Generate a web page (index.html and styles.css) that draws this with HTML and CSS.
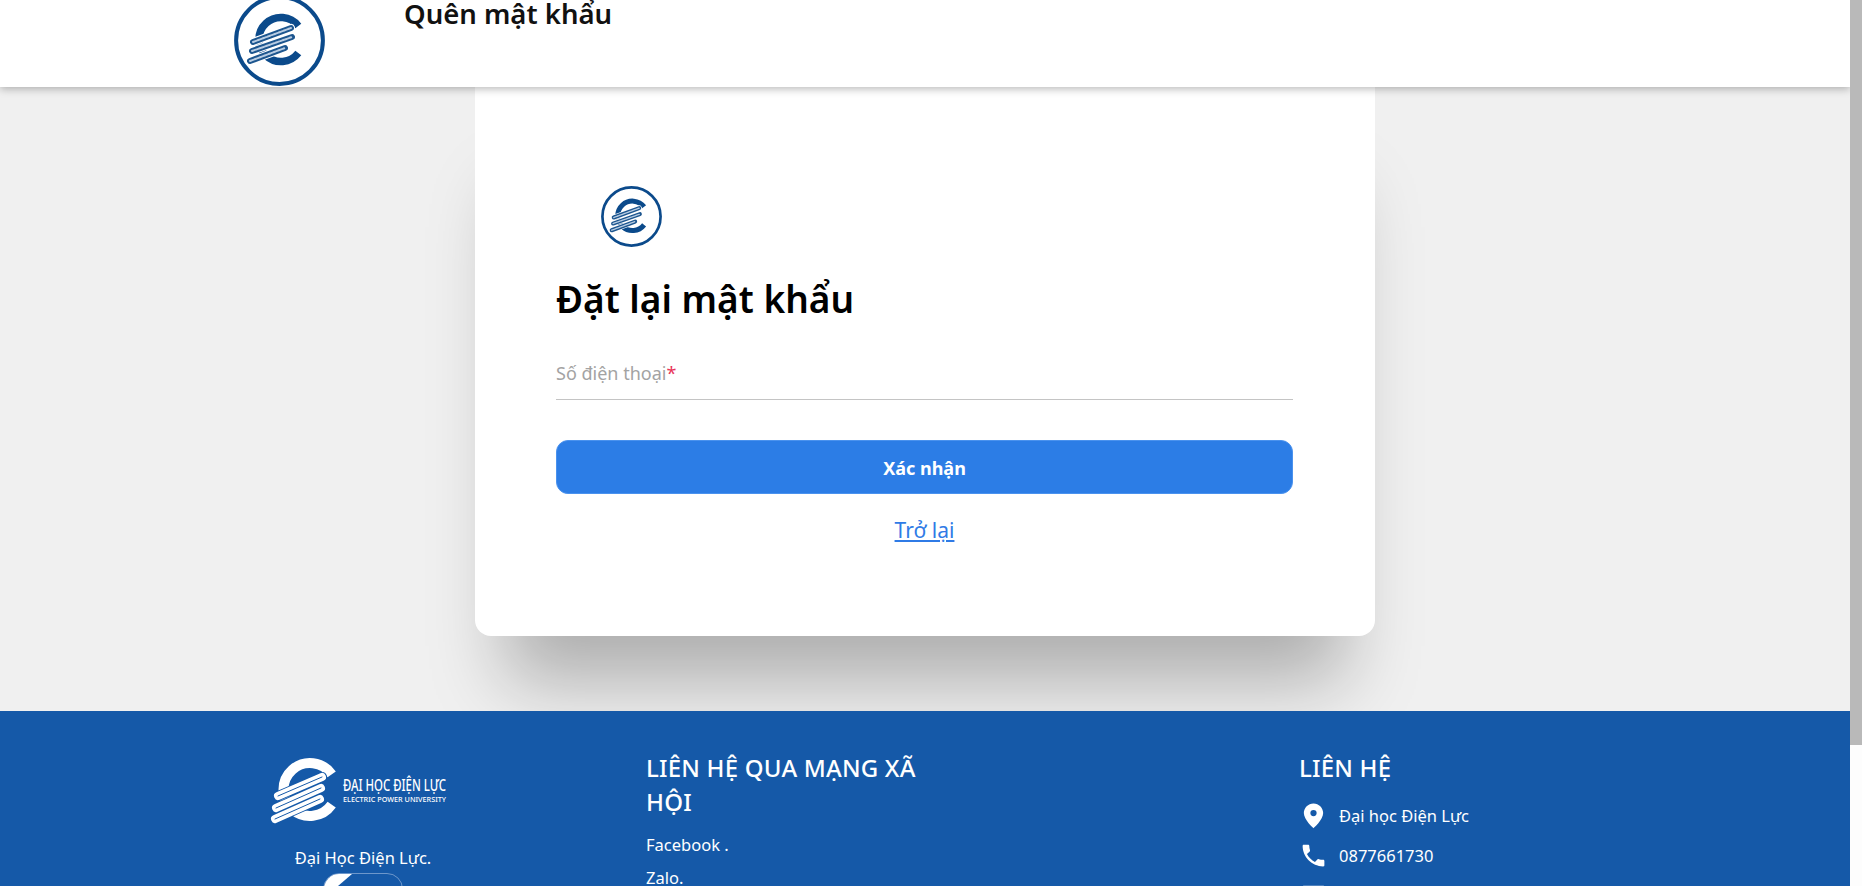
FILE: index.html
```html
<!doctype html>
<html lang="vi">
  <head>
    <meta charset="UTF-8" />
    <title>Quên mật khẩu</title>
    <link rel="stylesheet" href="styles.css">
  </head>
  <body>
    <svg class="defs" width="0" height="0">
      <symbol id="logo" viewBox="0 0 91 91">
        <circle cx="45.5" cy="45.5" r="43.400" fill="none" stroke="#0b4a8b" stroke-width="4" />
        <path d="M64.300 31A22 22 0 1 0 64.300 58" fill="none" stroke="#0b4a8b" stroke-width="7.500" />
        <g fill="none" stroke-linecap="round">
          <path d="M19 47L57 33M18 56L58 42M16 66L51 53" stroke="#fff" stroke-width="8" />
          <path d="M19 47L57 33M18 56L58 42M16 66L51 53" stroke="#1d568f" stroke-width="6" />
          <path d="M19 47L57 33M18 56L58 42M16 66L51 53" stroke="#b9cde3" stroke-width="2" stroke-dasharray="1.500 1" />
        </g>
      </symbol>
    </svg>

    <div class="page">
      <header class="topbar">
        <svg class="topbar-logo"><use href="#logo" /></svg>
        <h2>Quên mật khẩu</h2>
      </header>

      <main class="content">
        <form class="card">
          <svg class="card-logo"><use href="#logo" /></svg>
          <h1>Đặt lại mật khẩu</h1>
          <div class="form-group">
            <label for="phone">Số điện thoại<span class="req">*</span></label>
            <input type="text" id="phone" name="phone" />
          </div>
          <button type="button">Xác nhận</button>
          <a href="#" class="back">Trở lại</a>
        </form>
      </main>

      <footer class="footer">
        <div class="col-brand">
          <svg class="footer-logo" viewBox="0 0 180 70">
            <path d="M62.700 19.300A26.500 26.500 0 1 0 62.700 49.700" fill="none" stroke="#fff" stroke-width="10" />
            <g fill="none" stroke-linecap="round">
              <path d="M9 41L53 22M7 53L52 33M6 64L51 44" stroke="#1559a8" stroke-width="10" />
              <path d="M9 41L53 22M7 53L52 33M6 64L51 44" stroke="#fff" stroke-width="8" />
              <path d="M9 41L53 22M7 53L52 33M6 64L51 44" stroke="#1559a8" stroke-width="1" />
            </g>
            <text x="74" y="36" class="logo-name" textLength="103" lengthAdjust="spacingAndGlyphs">ĐẠI HỌC ĐIỆN LỰC</text>
            <text x="74" y="47" class="logo-sub" textLength="103" lengthAdjust="spacingAndGlyphs">ELECTRIC POWER UNIVERSITY</text>
          </svg>
          <p class="brand-name">Đại Học Điện Lực.</p>
          <div class="pill"><span class="pill-mark"></span></div>
        </div>

        <div class="col-social">
          <h3>LIÊN HỆ QUA MẠNG XÃ HỘI</h3>
          <p>Facebook .</p>
          <p>Zalo.</p>
        </div>

        <div class="col-contact">
          <h3>LIÊN HỆ</h3>
          <div class="contact-row">
            <svg viewBox="0 0 24 24"><path d="M12 2C7.600 2 4 5.600 4 10c0 5.600 8 12.600 8 12.600S20 15.600 20 10c0-4.400-3.600-8-8-8zm0 10.600a2.600 2.600 0 1 1 0-5.200 2.600 2.600 0 0 1 0 5.200z" /></svg>
            <span>Đại học Điện Lực</span>
          </div>
          <div class="contact-row">
            <svg viewBox="0 0 24 24"><path d="M6.600 10.800c1.400 2.800 3.800 5.100 6.600 6.600l2.200-2.200c.3-.3.700-.4 1-.2 1.100.4 2.300.6 3.600.6.600 0 1 .4 1 1V20c0 .6-.4 1-1 1C10.600 21 3 13.400 3 4c0-.6.400-1 1-1h3.500c.6 0 1 .4 1 1 0 1.300.2 2.500.6 3.600.1.300 0 .7-.2 1l-2.300 2.200z" /></svg>
            <span>0877661730</span>
          </div>
          <div class="contact-row">
            <svg viewBox="0 0 24 24"><path d="M20 4H4c-1.100 0-2 .9-2 2v12c0 1.100.9 2 2 2h16c1.100 0 2-.9 2-2V6c0-1.100-.9-2-2-2zm0 4l-8 5-8-5V6l8 5 8-5v2z" /></svg>
          </div>
        </div>
      </footer>
    </div>

    <div class="scrollbar"><div class="thumb"></div></div>
  </body>
</html>
```

FILE: styles.css
```css
html,
body {
  height: 886px;
  margin: 0;
  overflow: hidden;
}
body {
  display: flex;
  font-family: "Noto Sans", "Open Sans", sans-serif;
  background: #fdfdfd;
}
.defs {
  position: absolute;
}
.page {
  flex: 1;
  min-width: 0;
  height: 886px;
  overflow: hidden;
  display: flex;
  flex-direction: column;
}
.topbar {
  position: relative;
  z-index: 2;
  flex: none;
  height: 87px;
  background: #fff;
  box-shadow: 0 2px 8px rgba(0, 0, 0, 0.28);
  display: flex;
  align-items: flex-start;
  padding-left: 234px;
}
.topbar-logo {
  width: 91px;
  height: 91px;
  margin-top: -5px;
}
.topbar h2 {
  margin: 0 0 0 79px;
  font-size: 27.500px;
  font-weight: 600;
  line-height: 28px;
  color: #111;
}
.content {
  flex: none;
  height: 624px;
  background: #f0f0f0;
  display: flex;
  justify-content: center;
}
.card {
  box-sizing: border-box;
  width: 900px;
  height: 549px;
  padding: 99px 82px 0 81px;
  background: #fff;
  border-radius: 0 0 16px 16px;
  box-shadow: 0 75px 70px -30px rgba(0, 0, 0, 0.28);
  display: flex;
  flex-direction: column;
}
.card-logo {
  width: 61px;
  height: 61px;
  margin-left: 45px;
  flex: none;
}
.card h1 {
  margin: 27px 0 0;
  font-size: 37px;
  font-weight: 600;
  line-height: 50px;
  color: #000;
}
.form-group {
  position: relative;
  margin-top: 26px;
  height: 49px;
  border-bottom: 1px solid #c4c4c4;
}
.form-group label {
  position: absolute;
  left: 0;
  top: 11px;
  font-size: 18px;
  line-height: 24px;
  color: #a3a3a3;
}
.req {
  color: #e8345a;
}
.form-group input {
  width: 100%;
  height: 100%;
  padding: 0;
  border: none;
  outline: none;
  background: transparent;
  box-sizing: border-box;
}
button {
  margin-top: 40px;
  height: 54px;
  padding-top: 3px;
  border: 1px solid #4a92ee;
  border-radius: 12px;
  background-color: #2c7de6;
  color: #fff;
  font-family: inherit;
  font-size: 18px;
  font-weight: 700;
  cursor: pointer;
}
.back {
  align-self: center;
  margin-top: 21px;
  font-size: 21px;
  line-height: 30px;
  color: #2f7be6;
}
.footer {
  flex: none;
  height: 175px;
  background: #1559a8;
  color: #fff;
  box-sizing: border-box;
  padding: 0 0 0 226px;
  display: grid;
  grid-template-columns: 420px 653px 1fr;
}
.col-brand {
  width: 274px;
  display: flex;
  flex-direction: column;
  align-items: center;
  padding-top: 44px;
}
.footer-logo {
  width: 180px;
  height: 70px;
  flex: none;
  margin-left: -8px;
}
.logo-name {
  font-size: 16px;
  font-weight: 500;
  fill: #fff;
}
.logo-sub {
  font-size: 7px;
  font-weight: 500;
  fill: #fff;
}
.brand-name {
  margin: 22px 0 0;
  font-size: 16.500px;
  line-height: 22px;
}
.pill {
  flex: none;
  width: 78px;
  height: 40px;
  margin-top: 4px;
  border: 1px solid #6d97cb;
  border-radius: 16px;
  overflow: hidden;
}
.pill-mark {
  display: block;
  width: 28px;
  height: 24px;
  background: #fff;
  clip-path: polygon(0 0, 100% 0, 0 100%);
}
.col-social {
  padding-top: 40px;
}
.col-social h3,
.col-contact h3 {
  margin: 0;
  font-size: 24px;
  font-weight: 500;
  line-height: 34px;
  letter-spacing: 0.2px;
}
.col-social h3 {
  max-width: 290px;
  margin-bottom: 15px;
}
.col-social p {
  margin: 0 0 11px;
  font-size: 16.500px;
  line-height: 22px;
}
.col-contact {
  padding-top: 40px;
}
.contact-row {
  display: flex;
  align-items: center;
  gap: 11px;
  height: 40px;
  font-size: 16.500px;
}
.col-contact h3 {
  margin-bottom: 10px;
}
.contact-row svg {
  width: 29px;
  height: 29px;
  fill: #fff;
  flex: none;
}
.scrollbar {
  flex: none;
  width: 12px;
  height: 886px;
  background: #fdfdfd;
}
.thumb {
  height: 745px;
  background: #b9b9b9;
}
```
